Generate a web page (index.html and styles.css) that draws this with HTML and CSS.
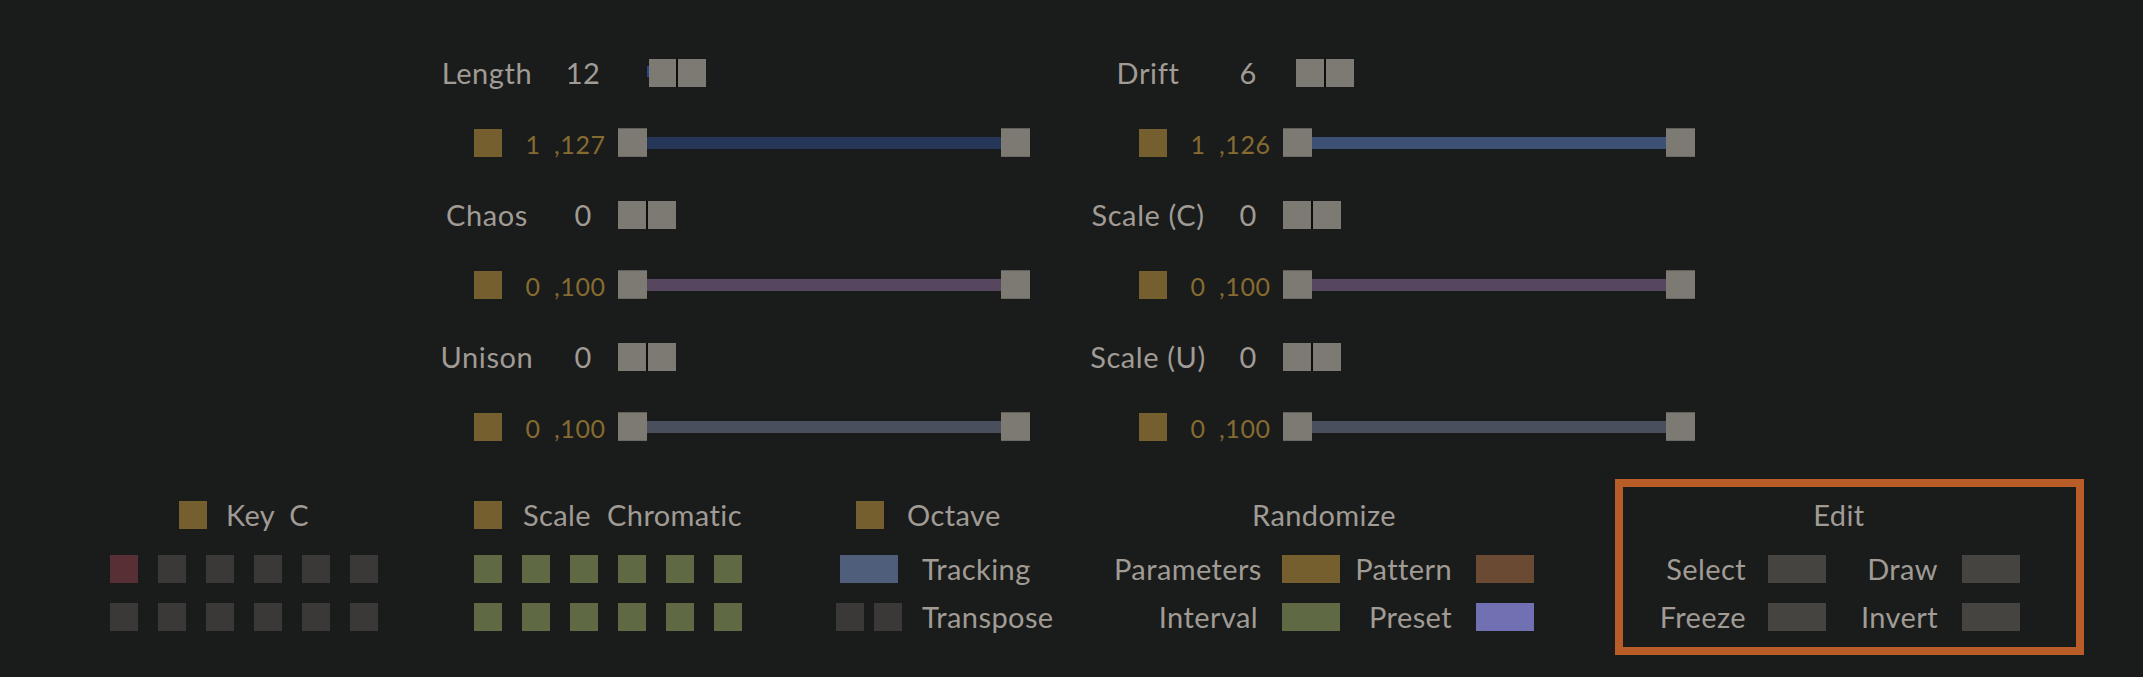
FILE: index.html
```html
<!DOCTYPE html>
<html>
<head>
<meta charset="utf-8">
<link rel="stylesheet" href="styles.css">
</head>
<body>
<div class="app">
  <section class="params">
    <div class="col col-a">
      <div class="param">
        <div class="head">
          <span class="label">Length</span>
          <span class="num">12</span>
          <span class="boxes boxes-len"><i class="mark"></i><span class="pair"><i class="nb"></i><i class="nb"></i></span></span>
        </div>
        <div class="range">
          <i class="sw"></i>
          <span class="lo">1</span><span class="hi">,127</span>
          <i class="handle"></i><i class="track t-navy"></i><i class="handle"></i>
        </div>
      </div>
      <div class="param">
        <div class="head">
          <span class="label">Chaos</span>
          <span class="num">0</span>
          <span class="boxes"><span class="pair"><i class="nb"></i><i class="nb"></i></span></span>
        </div>
        <div class="range">
          <i class="sw"></i>
          <span class="lo">0</span><span class="hi">,100</span>
          <i class="handle"></i><i class="track t-plum"></i><i class="handle"></i>
        </div>
      </div>
      <div class="param">
        <div class="head">
          <span class="label">Unison</span>
          <span class="num">0</span>
          <span class="boxes"><span class="pair"><i class="nb"></i><i class="nb"></i></span></span>
        </div>
        <div class="range">
          <i class="sw"></i>
          <span class="lo">0</span><span class="hi">,100</span>
          <i class="handle"></i><i class="track t-slate"></i><i class="handle"></i>
        </div>
      </div>
    </div>
    <div class="col col-b">
      <div class="param">
        <div class="head">
          <span class="label">Drift</span>
          <span class="num">6</span>
          <span class="boxes boxes-drift"><span class="pair"><i class="nb"></i><i class="nb"></i></span></span>
        </div>
        <div class="range">
          <i class="sw"></i>
          <span class="lo">1</span><span class="hi">,126</span>
          <i class="handle"></i><i class="track t-blue"></i><i class="handle"></i>
        </div>
      </div>
      <div class="param">
        <div class="head">
          <span class="label">Scale (C)</span>
          <span class="num">0</span>
          <span class="boxes"><span class="pair"><i class="nb"></i><i class="nb"></i></span></span>
        </div>
        <div class="range">
          <i class="sw"></i>
          <span class="lo">0</span><span class="hi">,100</span>
          <i class="handle"></i><i class="track t-plum"></i><i class="handle"></i>
        </div>
      </div>
      <div class="param">
        <div class="head">
          <span class="label">Scale (U)</span>
          <span class="num">0</span>
          <span class="boxes"><span class="pair"><i class="nb"></i><i class="nb"></i></span></span>
        </div>
        <div class="range">
          <i class="sw"></i>
          <span class="lo">0</span><span class="hi">,100</span>
          <i class="handle"></i><i class="track t-slate"></i><i class="handle"></i>
        </div>
      </div>
    </div>
  </section>

  <section class="bottom">
    <div class="group g-key">
      <div class="ghead center"><i class="sq gold"></i><span class="words w-key"><span>Key</span><span>C</span></span></div>
      <div class="grid6">
        <i class="sq red"></i><i class="sq dim"></i><i class="sq dim"></i><i class="sq dim"></i><i class="sq dim"></i><i class="sq dim"></i>
        <i class="sq dim"></i><i class="sq dim"></i><i class="sq dim"></i><i class="sq dim"></i><i class="sq dim"></i><i class="sq dim"></i>
      </div>
    </div>
    <div class="group g-scale">
      <div class="ghead"><i class="sq gold"></i><span class="words w-scale"><span>Scale</span><span>Chromatic</span></span></div>
      <div class="grid6">
        <i class="sq green"></i><i class="sq green"></i><i class="sq green"></i><i class="sq green"></i><i class="sq green"></i><i class="sq green"></i>
        <i class="sq green"></i><i class="sq green"></i><i class="sq green"></i><i class="sq green"></i><i class="sq green"></i><i class="sq green"></i>
      </div>
    </div>
    <div class="group g-oct">
      <div class="ghead oct-head"><i class="sq gold"></i><span class="txt">Octave</span></div>
      <div class="orow first"><i class="wide tracking"></i><span class="txt">Tracking</span></div>
      <div class="orow second"><span class="twin"><i class="sq dim"></i><i class="sq dim"></i></span><span class="txt">Transpose</span></div>
    </div>
    <div class="group g-rand">
      <div class="ghead center"><span class="txt">Randomize</span></div>
      <div class="rgrid">
        <span class="rl">Parameters</span><span class="rb"><i class="wide gold"></i></span>
        <span class="rl">Pattern</span><span class="rb"><i class="wide brown"></i></span>
        <span class="rl">Interval</span><span class="rb"><i class="wide green"></i></span>
        <span class="rl">Preset</span><span class="rb"><i class="wide violet"></i></span>
      </div>
    </div>
    <div class="group g-edit">
      <div class="edit-inner">
        <div class="ghead center"><span class="txt">Edit</span></div>
        <div class="egrid">
          <span class="rl">Select</span><span class="rb"><i class="wide ebox"></i></span>
          <span class="rl">Draw</span><span class="rb"><i class="wide ebox"></i></span>
          <span class="rl">Freeze</span><span class="rb"><i class="wide ebox"></i></span>
          <span class="rl">Invert</span><span class="rb"><i class="wide ebox"></i></span>
        </div>
      </div>
    </div>
  </section>
</div>
</body>
</html>
```

FILE: styles.css
```css
* { box-sizing: border-box; margin: 0; padding: 0; }
html, body { background: #1a1b1b; }
body {
  width: 2143px;
  height: 677px;
  overflow: hidden;
  font-family: Lato, "Liberation Sans", sans-serif;
  font-size: 29px;
  letter-spacing: 0.4px;
  color: #a09b95;
}
i { display: block; font-style: normal; }

/* ---------- parameter columns ---------- */
.params {
  display: flex;
  gap: 57px;
  padding: 59px 0 0 422px;
}
.col { width: 608px; display: flex; flex-direction: column; }
.param { height: 142px; }
.param:last-child { height: auto; }

.head { display: flex; align-items: center; height: 28px; }
.label { width: 130px; text-align: center; white-space: nowrap; line-height: 28px; letter-spacing: 0.6px; }
.col-b .label { margin-left: -4px; margin-right: 4px; }
.num { width: 40px; margin-left: 11px; text-align: center; line-height: 28px; }
.boxes { display: flex; align-items: center; margin-left: 15px; }
.boxes-len { margin-left: 44px; }
.boxes-drift { margin-left: 28px; }
.mark { width: 2px; height: 11px; background: #2b4687; margin-top: -4px; }
.pair { display: flex; gap: 2px; background: #0d0d0d; }
.nb { width: 28px; height: 28px; background: #7d7973; }
.boxes-len .nb:first-child { width: 27px; }

.range { display: flex; align-items: center; height: 29px; margin-top: 41px; }
.sw { width: 28px; height: 28px; background: #765f2e; margin-left: 52px; margin-top: 1px; }
.lo, .hi { color: #866b31; font-size: 25px; letter-spacing: 0.6px; line-height: 29px; padding-top: 3px; }
.lo { width: 20px; margin-left: 21px; text-align: center; }
.hi { width: 64px; margin-left: 11px; text-align: left; }
.handle { width: 29px; height: 29px; background: #7d7973; border-top: 1px solid #625e59; border-bottom: 1px solid #6c6863; }
.track { width: 354px; height: 12px; }
.t-navy { background: #253658; }
.t-blue { background: #3d5075; }
.t-plum { background: #56465f; }
.t-slate { background: #4a4f5e; }

/* ---------- bottom controls ---------- */
.bottom {
  display: flex;
  align-items: flex-start;
  margin-top: 38px;
  padding-left: 110px;
}
.group { padding-top: 22px; }
.ghead { display: flex; align-items: center; height: 28px; white-space: nowrap; }
.ghead.center { justify-content: center; }
.words { display: flex; margin-left: 19px; line-height: 28px; }
.w-key { gap: 14px; }
.w-scale { gap: 16px; margin-left: 21px; }
.txt { line-height: 28px; white-space: nowrap; }

.sq { width: 28px; height: 28px; }
.wide { width: 58px; height: 28px; }
.gold { background: #765f2e; }
.red { background: #582f34; }
.dim { background: #3a3938; }
.green { background: #5f6a45; }
.tracking { background: #4f5e7a; }
.brown { background: #6b4a33; }
.violet { background: #7070b3; }
.ebox { background: #464441; }

.grid6 {
  display: grid;
  grid-template-columns: repeat(6, 28px);
  gap: 20px;
  margin-top: 26px;
}

.g-key { width: 268px; }
.g-scale { width: 269px; margin-left: 96px; }
.g-oct { width: 216px; margin-left: 93px; }
.g-rand { width: 420px; margin-left: 62px; }

.oct-head { padding-left: 20px; }
.oct-head .txt { margin-left: 23px; }
.orow { display: flex; align-items: center; height: 28px; }
.orow.first { margin-top: 26px; padding-left: 4px; }
.orow.first .txt { margin-left: 24px; }
.orow.second { margin-top: 20px; }
.orow.second .txt { margin-left: 20px; }
.twin { display: flex; gap: 10px; }

.rgrid {
  display: grid;
  grid-template-columns: 144px 82px 112px 82px;
  grid-auto-rows: 28px;
  row-gap: 20px;
  margin-top: 26px;
}
.rl { text-align: right; line-height: 28px; white-space: nowrap; }
.rb { display: flex; justify-content: flex-end; }

.g-edit {
  width: 469px;
  margin-left: 81px;
  padding: 14px 0 16px 0;
  border: 8px solid #b85d28;
}
.edit-inner { width: 362px; margin-left: 35px; }
.egrid {
  display: grid;
  grid-template-columns: 88px 80px 112px 82px;
  grid-auto-rows: 28px;
  row-gap: 20px;
  margin-top: 26px;
}
```
